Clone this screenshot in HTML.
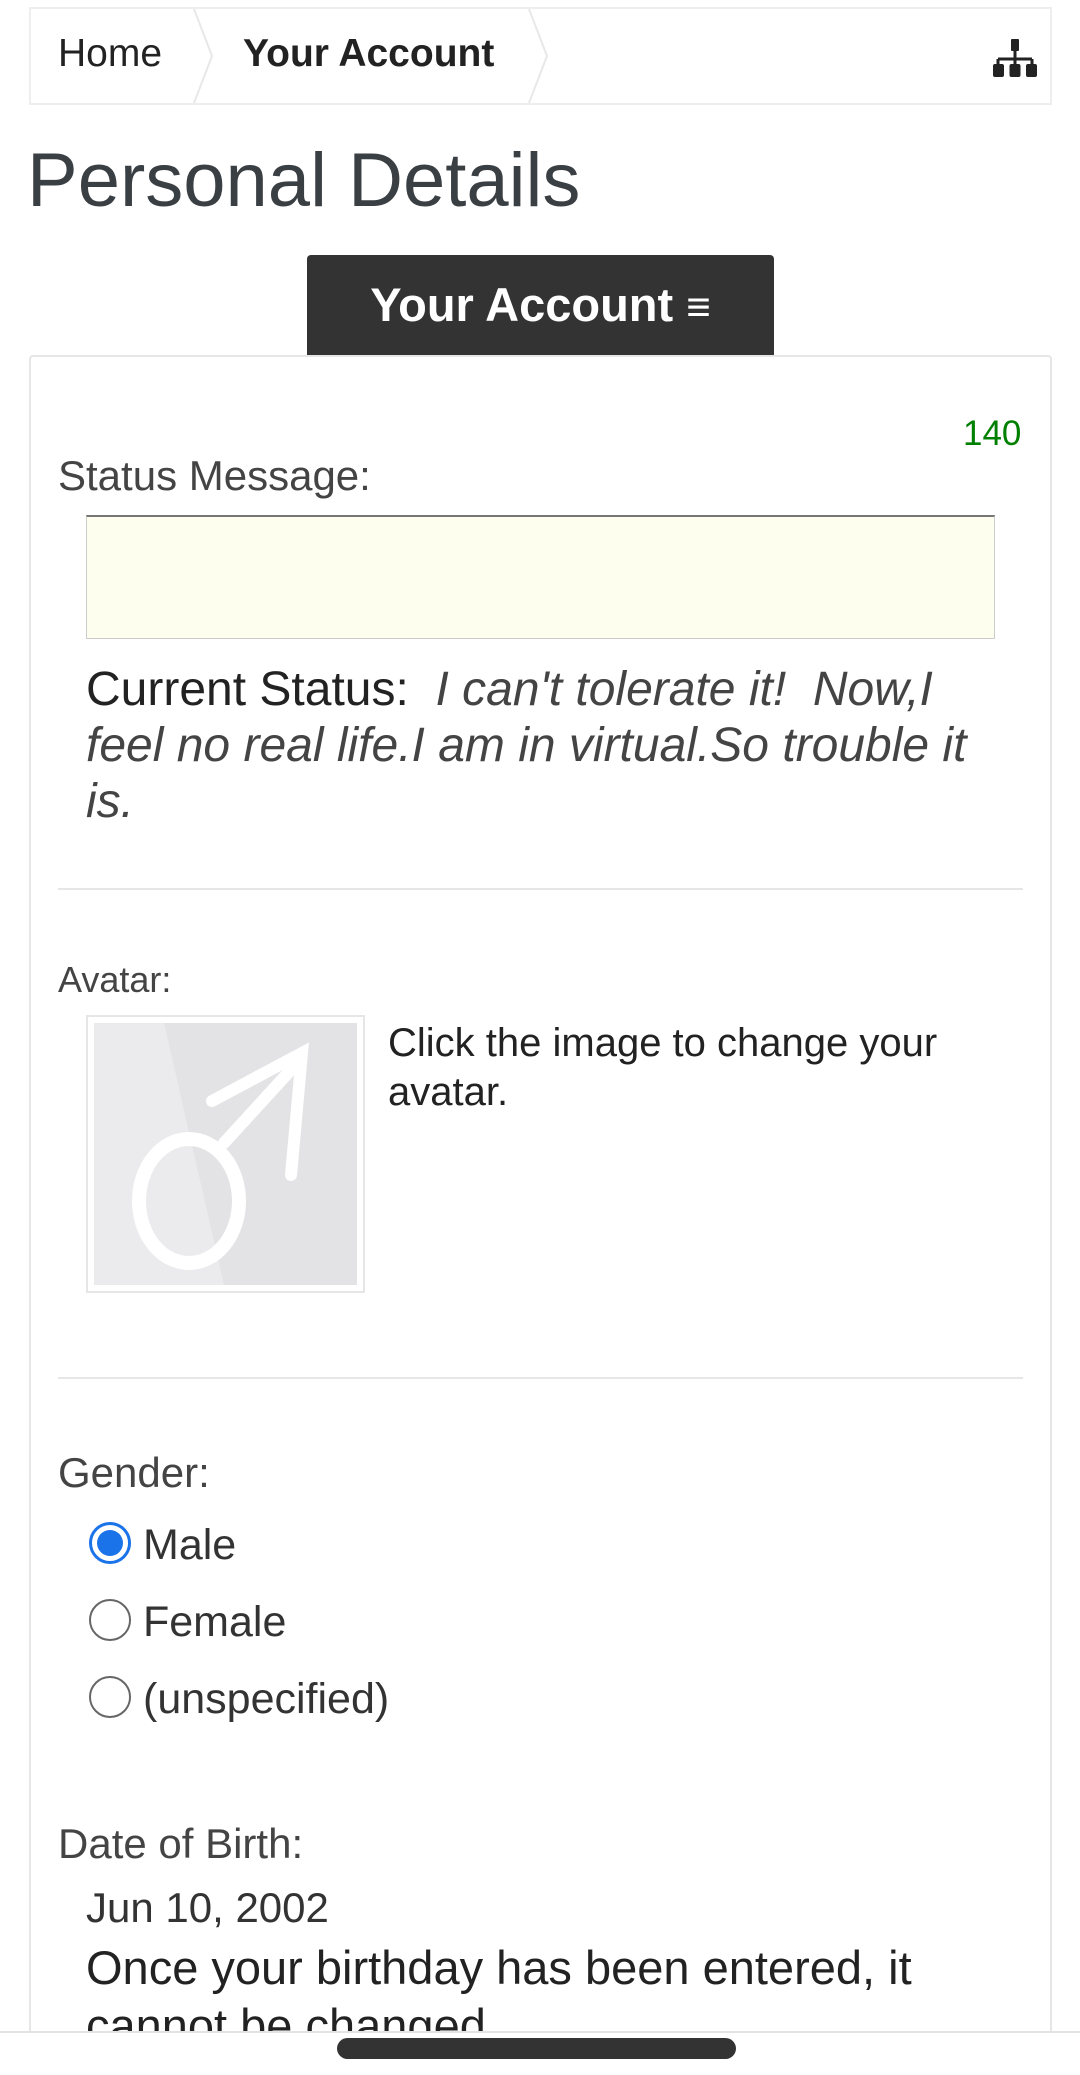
<!DOCTYPE html>
<html style="overflow:hidden;width:1080px;height:2075px"><head><meta charset="utf-8"><style>
*{margin:0;padding:0;box-sizing:border-box}
body{width:1080px;height:2075px;overflow:hidden;background:#fff;font-family:"Liberation Sans",sans-serif;color:#333;position:relative}
.a{position:absolute;white-space:nowrap}
</style></head><body>
<div class="a" style="left:29px;top:7px;width:1023px;height:98px;border:2px solid #eee;background:#fff"></div>
<svg class="a" style="left:190px;top:9px" width="30" height="94"><polyline points="4,0 22,47 4,94" fill="none" stroke="#e8e8e8" stroke-width="2"/></svg>
<svg class="a" style="left:525px;top:9px" width="30" height="94"><polyline points="4,0 22,47 4,94" fill="none" stroke="#e8e8e8" stroke-width="2"/></svg>
<div class="a" style="left:58px;top:32px;font-size:39px;color:#222">Home</div>
<div class="a" style="left:243px;top:32px;font-size:39px;font-weight:bold;color:#222">Your Account</div>
<svg class="a" style="left:993px;top:39px" width="44" height="38" viewBox="0 0 44 38"><rect x="18" y="0" width="8" height="12" rx="1" fill="#222"/><path d="M22 12v8M5 20h34M5 20v6M22 20v6M39 20v6" stroke="#222" stroke-width="3" fill="none"/><rect x="0" y="25" width="11" height="13" rx="2" fill="#222"/><rect x="16.5" y="25" width="11" height="13" rx="2" fill="#222"/><rect x="33" y="25" width="11" height="13" rx="2" fill="#222"/></svg>
<div class="a" style="left:27px;top:137px;font-size:76px;color:#3a3f44">Personal Details</div>
<div class="a" style="left:307px;top:255px;width:467px;height:100px;background:#333;border-radius:4px 4px 0 0;color:#fff;font-size:47px;font-weight:bold;text-align:center;line-height:100px">Your Account <span style="font-size:42px">≡</span></div>
<div class="a" style="left:29px;top:355px;width:1023px;height:1690px;border:2px solid #e6e6e6;border-radius:4px"></div>
<div class="a" style="left:963px;top:414px;font-size:35px;color:green">140</div>
<div class="a" style="left:58px;top:452px;font-size:42px;color:#444">Status Message:</div>
<div class="a" style="left:86px;top:515px;width:909px;height:124px;background:#fefeee;border:1px solid #ccc;border-top:2px solid #777"></div>
<div class="a" style="left:86px;top:662px;width:900px;font-size:48px;line-height:56px;white-space:normal;color:#222">Current Status: &nbsp;<i style="color:#444">I can't tolerate it! &nbsp;Now,I feel no real life.I am in virtual.So trouble it is.</i></div>
<div class="a" style="left:58px;top:888px;width:965px;height:2px;background:#e6e6e6"></div>
<div class="a" style="left:58px;top:959px;font-size:36px;color:#444">Avatar:</div>
<div class="a" style="left:86px;top:1015px;width:279px;height:278px;border:2px solid #e6e6e6;padding:6px"><svg width="263" height="262" viewBox="0 0 263 262"><rect width="263" height="262" fill="#e3e3e6"/><path d="M0 0h70l60 262H0z" fill="#ebebed"/><ellipse cx="95" cy="178" rx="50" ry="62" fill="none" stroke="#fff" stroke-width="14"/><path d="M130 120L205 38M118 78L208 30 197 152" fill="none" stroke="#fff" stroke-width="12" stroke-linecap="round"/></svg></div>
<div class="a" style="left:388px;top:1019px;font-size:40px;line-height:49px;white-space:normal;width:620px;color:#222">Click the image to change your avatar.</div>
<div class="a" style="left:58px;top:1377px;width:965px;height:2px;background:#e6e6e6"></div>
<div class="a" style="left:58px;top:1449px;font-size:42px;color:#444">Gender:</div>
<div class="a" style="left:89px;top:1522px;width:42px;height:42px;border-radius:50%;border:3px solid #1a73e8;background:#fff"><div style="margin:5px;width:26px;height:26px;border-radius:50%;background:#1a73e8"></div></div>
<div class="a" style="left:89px;top:1599px;width:42px;height:42px;border-radius:50%;border:2px solid #666"></div>
<div class="a" style="left:89px;top:1676px;width:42px;height:42px;border-radius:50%;border:2px solid #666"></div>
<div class="a" style="left:143px;top:1521px;font-size:43px;color:#333">Male</div>
<div class="a" style="left:143px;top:1598px;font-size:43px;color:#333">Female</div>
<div class="a" style="left:143px;top:1675px;font-size:43px;color:#333">(unspecified)</div>
<div class="a" style="left:58px;top:1820px;font-size:42px;color:#444">Date of Birth:</div>
<div class="a" style="left:86px;top:1884px;font-size:42px;color:#333">Jun 10, 2002</div>
<div class="a" style="left:86px;top:1939px;font-size:47px;line-height:58px;color:#222">Once your birthday has been entered, it<br>cannot be changed.</div>
<div class="a" style="left:0;top:2031px;width:1080px;height:44px;background:#fff;border-top:2px solid #e3e3e3"></div>
<div class="a" style="left:337px;top:2038px;width:399px;height:21px;border-radius:11px;background:#333"></div>
</body></html>
